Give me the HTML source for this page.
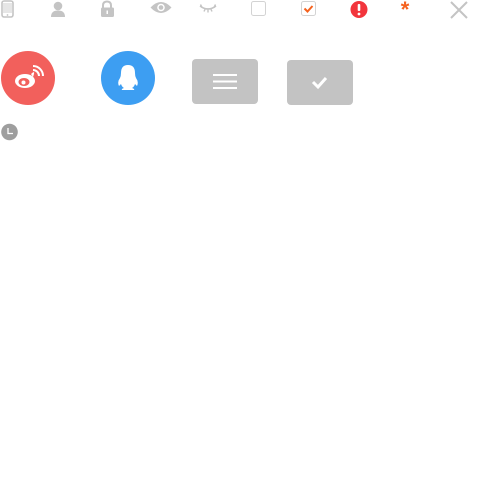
<!DOCTYPE html>
<html><head><style>
body{margin:0;width:500px;height:500px;background:#fff;position:relative;overflow:hidden;font-family:"Liberation Sans",sans-serif}
svg{position:absolute;left:0;top:0}
</style></head><body>
<svg width="500" height="500" viewBox="0 0 500 500">
<!-- phone -->
<rect x="2" y="1" width="11" height="16" rx="2" fill="none" stroke="#c4c4c4" stroke-width="1.6"/>
<rect x="3" y="3" width="9" height="10" fill="#e6e6e6"/>
<circle cx="7.5" cy="15" r="0.9" fill="#c4c4c4"/>
<!-- person -->
<circle cx="58" cy="6" r="4.3" fill="#c4c4c4"/>
<path d="M51 17 Q51 10.5 58 10.5 Q65 10.5 65 17 Z" fill="#c4c4c4"/>
<!-- lock -->
<path d="M103 8 V5.5 Q103 1.5 107 1.5 Q111 1.5 111 5.5 V8" fill="none" stroke="#c4c4c4" stroke-width="2"/>
<rect x="101" y="7.5" width="13" height="9.5" rx="1.5" fill="#c4c4c4"/>
<rect x="106.5" y="10.5" width="1.5" height="3.5" fill="#fff"/>
<!-- eye -->
<path d="M150.5 7.5 Q161 -3.5 171.5 7.5 Q161 18.5 150.5 7.5 Z" fill="#c4c4c4"/>
<circle cx="161" cy="7.5" r="3.8" fill="#fff"/>
<circle cx="161" cy="7.5" r="2.3" fill="#c4c4c4"/>
<!-- closed eye -->
<path d="M200 6 Q208 12 216 6" fill="none" stroke="#c4c4c4" stroke-width="1.6"/>
<path d="M202 7.5 L200.5 4.5 M205 9.3 L204 11.5 M208 9.8 V12.5 M211 9.3 L212 11.5 M214 7.5 L215.5 4.5" stroke="#c4c4c4" stroke-width="1.4"/>
<!-- checkboxes -->
<rect x="251.5" y="1.5" width="14" height="14" rx="2" fill="#fff" stroke="#d3d3d3"/>
<rect x="301.5" y="1.5" width="14" height="14" rx="2" fill="#fff" stroke="#d3d3d3"/>
<path d="M304.5 8.5 L307.5 11.5 L312.5 6" fill="none" stroke="#f5621e" stroke-width="2"/>
<!-- error -->
<circle cx="359" cy="9.5" r="8.5" fill="#f2353c"/>
<rect x="357.7" y="4" width="2.6" height="7" rx="1" fill="#fff"/>
<circle cx="359" cy="14" r="1.4" fill="#fff"/>
<!-- asterisk -->
<text x="405" y="17" font-size="22" font-weight="bold" fill="#f5621e" text-anchor="middle" font-family="Liberation Sans">*</text>
<!-- X -->
<path d="M451 2 L467 18 M467 2 L451 18" stroke="#c4c4c4" stroke-width="2"/>
<!-- weibo -->
<circle cx="28" cy="78" r="27" fill="#f2605c"/>
<ellipse cx="25" cy="81" rx="10" ry="7" fill="#fff"/>
<ellipse cx="24" cy="82" rx="5.5" ry="4" fill="#f2605c"/>
<circle cx="23.5" cy="82.5" r="2" fill="#fff"/>
<path d="M31 74 Q36 69 33 77" fill="#fff"/>
<path d="M33 70 A6 6 0 0 1 39 76" fill="none" stroke="#fff" stroke-width="2"/>
<path d="M33 66 A10 10 0 0 1 43 76" fill="none" stroke="#fff" stroke-width="2"/>
<!-- qq -->
<circle cx="128" cy="78" r="27" fill="#3d9ef2"/>
<path d="M128 65 Q121 65 121 73 Q121 76 120 78 Q117 82 119 86 L121 84 Q122 87 124 88 Q121 89 122 90 L134 90 Q135 89 132 88 Q134 87 135 84 L137 86 Q139 82 136 78 Q135 76 135 73 Q135 65 128 65 Z" fill="#fff"/>
<!-- menu button -->
<rect x="192" y="59" width="66" height="45" rx="4" fill="#c3c3c3"/>
<rect x="213" y="74" width="24" height="2" fill="#fff"/>
<rect x="213" y="80.5" width="24" height="2" fill="#fff"/>
<rect x="213" y="87" width="24" height="2" fill="#fff"/>
<!-- check button -->
<rect x="287" y="60" width="66" height="45" rx="4" fill="#c3c3c3"/>
<path d="M313 82 L318 87 L326 78" fill="none" stroke="#fff" stroke-width="3"/>
<!-- clock -->
<circle cx="9.5" cy="132" r="8.3" fill="#9e9e9e"/>
<path d="M8 128 V133.5 H13" fill="none" stroke="#fff" stroke-width="1.3"/>
</svg>
</body></html>
